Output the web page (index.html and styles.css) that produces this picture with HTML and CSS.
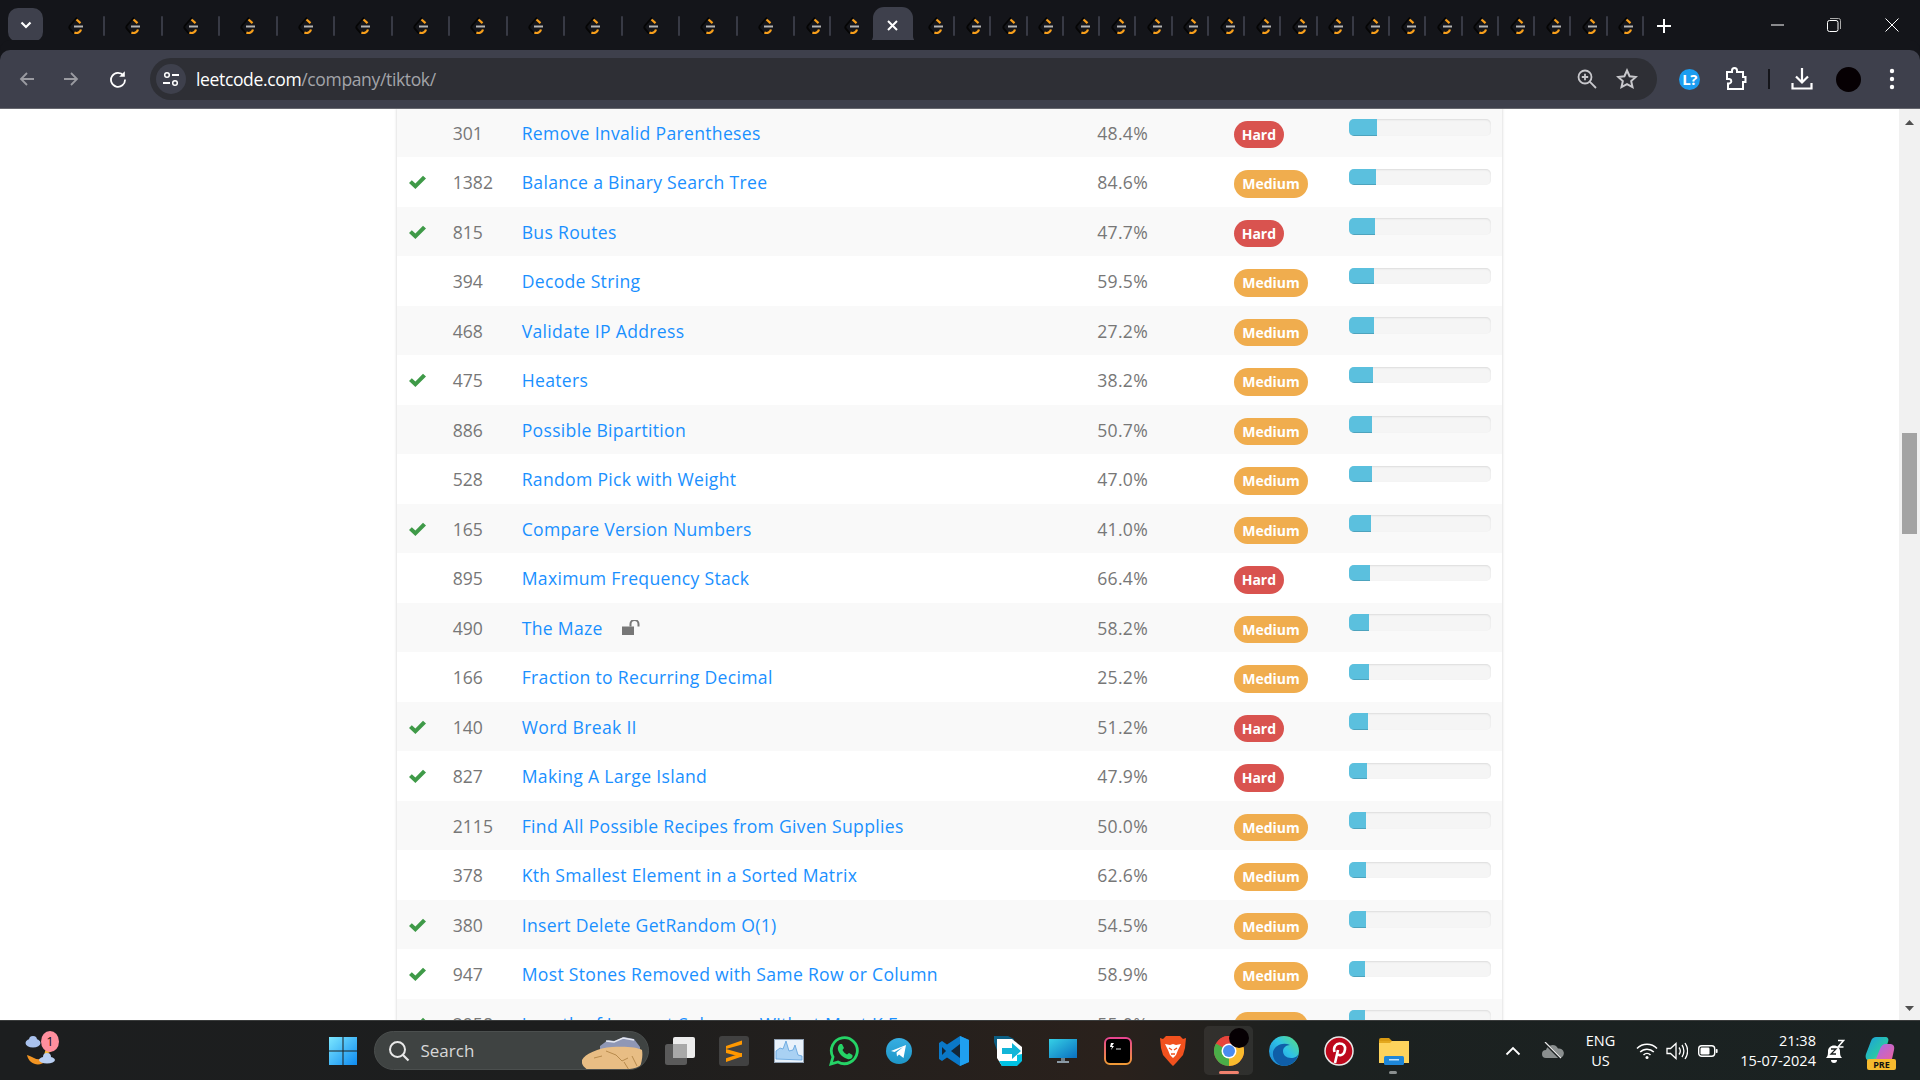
FILE: index.html
```html
<!DOCTYPE html>
<html lang="en">
<head>
<meta charset="utf-8">
<title>TikTok - LeetCode</title>
<link rel="stylesheet" href="styles.css">
</head>
<body>
<svg class="defs" width="0" height="0" aria-hidden="true">
  <symbol id="lc" viewBox="0 0 20 20">
    <path d="M11 1.500 4 9.500c-1 1.200-1 2.200 0 3.400l4 4.600" fill="none" stroke="#050505" stroke-width="1.800"/>
    <path d="M10.500 3.500l4 3.600" fill="none" stroke="#f89f1b" stroke-width="2.200"/>
    <path d="M15 13.500c-.6 2.600-3.600 4.400-6.600 3" fill="none" stroke="#f89f1b" stroke-width="2.200"/>
    <path d="M8 10.500h9" stroke="#b3b3b3" stroke-width="2"/>
  </symbol>
  <symbol id="ok" viewBox="0 0 17 14">
    <path d="M0 8 2.800 5.200 6.400 8.600 14 .8 17 3.600 6.400 14Z" fill="#3f9a48"/>
  </symbol>
</svg>

<header class="strip">
  <div class="tabsearch"><svg width="14" height="14" viewBox="0 0 14 14"><path d="M2.500 4.500 7 9l4.500-4.500" fill="none" stroke="#fff" stroke-width="2.200"/></svg></div>
  <div class="tabs">
    <div class="tab wide"><svg class="fav"><use href="#lc"/></svg></div>
    <div class="tab wide"><svg class="fav"><use href="#lc"/></svg></div>
    <div class="tab wide"><svg class="fav"><use href="#lc"/></svg></div>
    <div class="tab wide"><svg class="fav"><use href="#lc"/></svg></div>
    <div class="tab wide"><svg class="fav"><use href="#lc"/></svg></div>
    <div class="tab wide"><svg class="fav"><use href="#lc"/></svg></div>
    <div class="tab wide"><svg class="fav"><use href="#lc"/></svg></div>
    <div class="tab wide"><svg class="fav"><use href="#lc"/></svg></div>
    <div class="tab wide"><svg class="fav"><use href="#lc"/></svg></div>
    <div class="tab wide"><svg class="fav"><use href="#lc"/></svg></div>
    <div class="tab wide"><svg class="fav"><use href="#lc"/></svg></div>
    <div class="tab wide"><svg class="fav"><use href="#lc"/></svg></div>
    <div class="tab wide"><svg class="fav"><use href="#lc"/></svg></div>
    <div class="tab narrow"><svg class="fav"><use href="#lc"/></svg></div>
    <div class="tab before-active"><svg class="fav"><use href="#lc"/></svg></div>
    <div class="tab-active"><svg width="13" height="13" viewBox="0 0 13 13"><path d="M2 2l9 9M11 2l-9 9" stroke="#fff" stroke-width="2"/></svg></div>
    <div class="tab after-active"><svg class="fav"><use href="#lc"/></svg></div>
    <div class="tab narrow"><svg class="fav"><use href="#lc"/></svg></div>
    <div class="tab narrow"><svg class="fav"><use href="#lc"/></svg></div>
    <div class="tab narrow"><svg class="fav"><use href="#lc"/></svg></div>
    <div class="tab narrow"><svg class="fav"><use href="#lc"/></svg></div>
    <div class="tab narrow"><svg class="fav"><use href="#lc"/></svg></div>
    <div class="tab narrow"><svg class="fav"><use href="#lc"/></svg></div>
    <div class="tab narrow"><svg class="fav"><use href="#lc"/></svg></div>
    <div class="tab narrow"><svg class="fav"><use href="#lc"/></svg></div>
    <div class="tab narrow"><svg class="fav"><use href="#lc"/></svg></div>
    <div class="tab narrow"><svg class="fav"><use href="#lc"/></svg></div>
    <div class="tab narrow"><svg class="fav"><use href="#lc"/></svg></div>
    <div class="tab narrow"><svg class="fav"><use href="#lc"/></svg></div>
    <div class="tab narrow"><svg class="fav"><use href="#lc"/></svg></div>
    <div class="tab narrow"><svg class="fav"><use href="#lc"/></svg></div>
    <div class="tab narrow"><svg class="fav"><use href="#lc"/></svg></div>
    <div class="tab narrow"><svg class="fav"><use href="#lc"/></svg></div>
    <div class="tab narrow"><svg class="fav"><use href="#lc"/></svg></div>
    <div class="tab narrow"><svg class="fav"><use href="#lc"/></svg></div>
    <div class="tab narrow"><svg class="fav"><use href="#lc"/></svg></div>
  </div>
  <svg class="newtab" width="14" height="14" viewBox="0 0 14 14"><path d="M7 0v14M0 7h14" stroke="#fff" stroke-width="2"/></svg>
  <div class="winctl">
    <svg class="wc-min" width="14" height="14" viewBox="0 0 14 14"><path d="M0 7h13" stroke="#fff" stroke-width="1"/></svg>
    <svg class="wc-max" width="14" height="14" viewBox="0 0 14 14"><rect x=".5" y="2.500" width="10.500" height="11" rx="2" fill="none" stroke="#fff"/><path d="M3 .5h8.500q2 0 2 2V11" fill="none" stroke="#aaa"/></svg>
    <svg class="wc-close" width="14" height="14" viewBox="0 0 14 14"><path d="M.5.5l13 13M13.500.5l-13 13" stroke="#fff" stroke-width="1"/></svg>
  </div>
</header>

<nav class="toolbar">
  <div class="btn"><svg width="18" height="18" viewBox="0 0 18 18"><path d="M16 9H3M9 3 3 9l6 6" fill="none" stroke="#9a9ba1" stroke-width="1.800"/></svg></div>
  <div class="btn"><svg width="18" height="18" viewBox="0 0 18 18"><path d="M2 9h13M9 3l6 6-6 6" fill="none" stroke="#9a9ba1" stroke-width="1.800"/></svg></div>
  <div class="btn reload"><svg width="18" height="18" viewBox="0 0 18 18"><path d="M14.500 5.500A7 7 0 1 0 16 9.500" fill="none" stroke="#fff" stroke-width="1.800"/><path d="M15.800 1.200v5.600h-5.600z" fill="#fff"/></svg></div>
  <div class="omnibox">
    <div class="site"><svg width="18" height="18" viewBox="0 0 18 18"><circle cx="5" cy="5" r="2.300" fill="none" stroke="#fff" stroke-width="1.500"/><path d="M10 5h7M1 13h7" stroke="#fff" stroke-width="1.800"/><circle cx="13" cy="13" r="2.300" fill="none" stroke="#fff" stroke-width="1.500"/></svg></div>
    <div class="url">leetcode.com<span class="url-path">/company/tiktok/</span></div>
    <div class="omni-icons">
      <div class="omni-btn"><svg width="22" height="22" viewBox="0 0 22 22"><circle cx="9" cy="9" r="6.500" fill="none" stroke="#c8c8cc" stroke-width="1.800"/><path d="M13.700 13.700 20 20" stroke="#c8c8cc" stroke-width="1.800"/><path d="M9 5.800v6.400M5.800 9h6.400" stroke="#c8c8cc" stroke-width="1.800"/></svg></div>
      <div class="omni-btn"><svg width="22" height="22" viewBox="0 0 22 22"><path d="M11 2.500l2.600 5.700 6.200.7-4.600 4.200 1.300 6.100L11 16.200l-5.500 3 1.300-6.100-4.600-4.200 6.200-.7z" fill="none" stroke="#c8c8cc" stroke-width="2"/></svg></div>
    </div>
  </div>
  <div class="ext lc-ext"><span class="lc-badge">L?</span></div>
  <div class="ext puzzle"><svg width="22" height="24" viewBox="0 0 22 24"><path d="M2 5h5V3.500a2.500 2.500 0 0 1 5 0V5h6v5h2.500v5H18v7H3v-5.500h1.500a2.300 2.300 0 0 0 0-4.500H2z" fill="none" stroke="#fff" stroke-width="2"/></svg></div>
  <div class="tool-sep"></div>
  <div class="ext dl"><svg width="22" height="24" viewBox="0 0 22 24"><path d="M11 1v14M5 9.500l6 6 6-6" fill="none" stroke="#fff" stroke-width="2.200"/><path d="M1.500 16v5.500h19V16" fill="none" stroke="#fff" stroke-width="2.200"/></svg></div>
  <div class="ext avatar-wrap"><div class="avatar"></div></div>
  <div class="ext kebab"><svg width="6" height="22" viewBox="0 0 6 22"><circle cx="3" cy="3" r="2.200" fill="#fff"/><circle cx="3" cy="11" r="2.200" fill="#fff"/><circle cx="3" cy="19" r="2.200" fill="#fff"/></svg></div>
</nav>

<main class="viewport">
  <div class="page">
    <div class="table">
      <div class="row"><span class="c-check"></span><span class="c-num">301</span><span class="c-title"><a class="link">Remove Invalid Parentheses</a></span><span class="c-acc">48.4%</span><span class="c-diff"><span class="badge hard">Hard</span></span><span class="c-freq"><span class="bar"><span class="fill" style="width:28px"></span></span></span></div>
      <div class="row"><span class="c-check"><svg class="ok"><use href="#ok"/></svg></span><span class="c-num">1382</span><span class="c-title"><a class="link">Balance a Binary Search Tree</a></span><span class="c-acc">84.6%</span><span class="c-diff"><span class="badge medium">Medium</span></span><span class="c-freq"><span class="bar"><span class="fill" style="width:27px"></span></span></span></div>
      <div class="row"><span class="c-check"><svg class="ok"><use href="#ok"/></svg></span><span class="c-num">815</span><span class="c-title"><a class="link">Bus Routes</a></span><span class="c-acc">47.7%</span><span class="c-diff"><span class="badge hard">Hard</span></span><span class="c-freq"><span class="bar"><span class="fill" style="width:26px"></span></span></span></div>
      <div class="row"><span class="c-check"></span><span class="c-num">394</span><span class="c-title"><a class="link">Decode String</a></span><span class="c-acc">59.5%</span><span class="c-diff"><span class="badge medium">Medium</span></span><span class="c-freq"><span class="bar"><span class="fill" style="width:25px"></span></span></span></div>
      <div class="row"><span class="c-check"></span><span class="c-num">468</span><span class="c-title"><a class="link">Validate IP Address</a></span><span class="c-acc">27.2%</span><span class="c-diff"><span class="badge medium">Medium</span></span><span class="c-freq"><span class="bar"><span class="fill" style="width:25px"></span></span></span></div>
      <div class="row"><span class="c-check"><svg class="ok"><use href="#ok"/></svg></span><span class="c-num">475</span><span class="c-title"><a class="link">Heaters</a></span><span class="c-acc">38.2%</span><span class="c-diff"><span class="badge medium">Medium</span></span><span class="c-freq"><span class="bar"><span class="fill" style="width:24px"></span></span></span></div>
      <div class="row"><span class="c-check"></span><span class="c-num">886</span><span class="c-title"><a class="link">Possible Bipartition</a></span><span class="c-acc">50.7%</span><span class="c-diff"><span class="badge medium">Medium</span></span><span class="c-freq"><span class="bar"><span class="fill" style="width:23px"></span></span></span></div>
      <div class="row"><span class="c-check"></span><span class="c-num">528</span><span class="c-title"><a class="link">Random Pick with Weight</a></span><span class="c-acc">47.0%</span><span class="c-diff"><span class="badge medium">Medium</span></span><span class="c-freq"><span class="bar"><span class="fill" style="width:23px"></span></span></span></div>
      <div class="row"><span class="c-check"><svg class="ok"><use href="#ok"/></svg></span><span class="c-num">165</span><span class="c-title"><a class="link">Compare Version Numbers</a></span><span class="c-acc">41.0%</span><span class="c-diff"><span class="badge medium">Medium</span></span><span class="c-freq"><span class="bar"><span class="fill" style="width:22px"></span></span></span></div>
      <div class="row"><span class="c-check"></span><span class="c-num">895</span><span class="c-title"><a class="link">Maximum Frequency Stack</a></span><span class="c-acc">66.4%</span><span class="c-diff"><span class="badge hard">Hard</span></span><span class="c-freq"><span class="bar"><span class="fill" style="width:21px"></span></span></span></div>
      <div class="row"><span class="c-check"></span><span class="c-num">490</span><span class="c-title"><a class="link">The Maze</a><svg class="lock" width="19" height="15" viewBox="0 0 19 15"><path d="M0 6.500h12V15H0z" fill="#777"/><path d="M8.500 6.500V4a4 4 0 0 1 8 0v2.500" fill="none" stroke="#777" stroke-width="2"/></svg></span><span class="c-acc">58.2%</span><span class="c-diff"><span class="badge medium">Medium</span></span><span class="c-freq"><span class="bar"><span class="fill" style="width:20px"></span></span></span></div>
      <div class="row"><span class="c-check"></span><span class="c-num">166</span><span class="c-title"><a class="link">Fraction to Recurring Decimal</a></span><span class="c-acc">25.2%</span><span class="c-diff"><span class="badge medium">Medium</span></span><span class="c-freq"><span class="bar"><span class="fill" style="width:20px"></span></span></span></div>
      <div class="row"><span class="c-check"><svg class="ok"><use href="#ok"/></svg></span><span class="c-num">140</span><span class="c-title"><a class="link">Word Break II</a></span><span class="c-acc">51.2%</span><span class="c-diff"><span class="badge hard">Hard</span></span><span class="c-freq"><span class="bar"><span class="fill" style="width:19px"></span></span></span></div>
      <div class="row"><span class="c-check"><svg class="ok"><use href="#ok"/></svg></span><span class="c-num">827</span><span class="c-title"><a class="link">Making A Large Island</a></span><span class="c-acc">47.9%</span><span class="c-diff"><span class="badge hard">Hard</span></span><span class="c-freq"><span class="bar"><span class="fill" style="width:18px"></span></span></span></div>
      <div class="row"><span class="c-check"></span><span class="c-num">2115</span><span class="c-title"><a class="link">Find All Possible Recipes from Given Supplies</a></span><span class="c-acc">50.0%</span><span class="c-diff"><span class="badge medium">Medium</span></span><span class="c-freq"><span class="bar"><span class="fill" style="width:17px"></span></span></span></div>
      <div class="row"><span class="c-check"></span><span class="c-num">378</span><span class="c-title"><a class="link">Kth Smallest Element in a Sorted Matrix</a></span><span class="c-acc">62.6%</span><span class="c-diff"><span class="badge medium">Medium</span></span><span class="c-freq"><span class="bar"><span class="fill" style="width:17px"></span></span></span></div>
      <div class="row"><span class="c-check"><svg class="ok"><use href="#ok"/></svg></span><span class="c-num">380</span><span class="c-title"><a class="link">Insert Delete GetRandom O(1)</a></span><span class="c-acc">54.5%</span><span class="c-diff"><span class="badge medium">Medium</span></span><span class="c-freq"><span class="bar"><span class="fill" style="width:17px"></span></span></span></div>
      <div class="row"><span class="c-check"><svg class="ok"><use href="#ok"/></svg></span><span class="c-num">947</span><span class="c-title"><a class="link">Most Stones Removed with Same Row or Column</a></span><span class="c-acc">58.9%</span><span class="c-diff"><span class="badge medium">Medium</span></span><span class="c-freq"><span class="bar"><span class="fill" style="width:16px"></span></span></span></div>
      <div class="row"><span class="c-check"><svg class="ok"><use href="#ok"/></svg></span><span class="c-num">2958</span><span class="c-title"><a class="link">Length of Longest Subarray With at Most K Frequency</a></span><span class="c-acc">55.0%</span><span class="c-diff"><span class="badge medium">Medium</span></span><span class="c-freq"><span class="bar"><span class="fill" style="width:16px"></span></span></span></div>
    </div>
  </div>
  <div class="scrollbar">
    <svg class="sb-arrow" width="21" height="17" viewBox="0 0 21 17"><path d="M6 11l4.500-5 4.500 5z" fill="#505050"/></svg>
    <div class="sb-track"><div class="sb-thumb"></div></div>
    <svg class="sb-arrow" width="21" height="17" viewBox="0 0 21 17"><path d="M6 6l4.500 5L15 6z" fill="#505050"/></svg>
  </div>
</main>

<footer class="taskbar">
  <div class="weather">
    <svg width="36" height="40" viewBox="0 0 36 40"><ellipse cx="9" cy="12" rx="7.500" ry="4.500" fill="#a9c2ee"/><circle cx="9" cy="9" r="4" fill="#a9c2ee"/><path d="M3 24c2 10 13 12 19 6 2-2 4-5 3-9-2 6-10 9-15 6-2-1-4-2-7-3z" fill="#f29422"/><path d="M23 14l5 6-8 4z" fill="#f6b73c"/><ellipse cx="23" cy="29" rx="8" ry="3.500" fill="#b9cff2"/><circle cx="23" cy="26" r="4" fill="#b9cff2"/></svg>
    <span class="notif">1</span>
  </div>
  <div class="task win"><svg width="30" height="30" viewBox="0 0 30 30"><defs><linearGradient id="wg" x1="0" y1="0" x2="1" y2="1"><stop offset="0" stop-color="#7ce7ff"/><stop offset="1" stop-color="#0e8bf0"/></linearGradient></defs><path d="M1 1h13.500v13.500H1zM15.500 1H29v13.500H15.500zM1 15.500h13.500V29H1zM15.500 15.500H29V29H15.500z" fill="url(#wg)"/></svg></div>
  <div class="search">
    <svg width="24" height="24" viewBox="0 0 24 24"><circle cx="10.500" cy="10.500" r="7.500" fill="none" stroke="#e8e8e8" stroke-width="2"/><path d="M16 16l5.500 5.500" stroke="#e8e8e8" stroke-width="2.200"/></svg>
    <span class="search-label">Search</span>
    <svg class="search-art" width="62" height="38" viewBox="0 0 62 38"><path d="M18 14l8-6 7 1 9-4 10 2 6 8v10H18z" fill="#8f97b5"/><path d="M24 9l8 1 9-4 11 2" fill="none" stroke="#e4e7f0" stroke-width="1.500"/><path d="M0 28c3-6 16-12 30-13 12-1 26 0 30 3 1 6 0 12-3 20H6C1 35-1 31 0 28z" fill="#e8bd84"/><path d="M24 19l10 4 6 6 6-3M42 30l5 8M50 24l5 10M12 26l8-2" fill="none" stroke="#b78a4c" stroke-width="1"/></svg>
  </div>
  <div class="task first-app"><svg width="30" height="30" viewBox="0 0 30 30"><rect x="0" y="8" width="22" height="21" rx="2.500" fill="#5a5a5a"/><rect x="8" y="1" width="22" height="21" rx="2" fill="#ececec"/><rect x="8" y="8" width="14" height="14" fill="#a8a8a8"/></svg></div>
  <div class="task"><svg width="30" height="30" viewBox="0 0 30 30"><rect width="30" height="30" rx="3" fill="#414141"/><path d="M7 13v-3l16-5.500v4zM23 17v3.500L7 26v-3.800zM7 13l16 4.500v3.500L7 17z" fill="#ff9800"/></svg></div>
  <div class="task"><svg width="30" height="24" viewBox="0 0 30 24"><rect x=".5" y=".5" width="29" height="23" fill="#e9f2fb" stroke="#93a3b5"/><path d="M2 20V12l4-3 3 1 3-8 3 10 4-1 2-5 3 10 4 1v4z" fill="#a9d1f3" stroke="#5c9fdc" stroke-width=".8"/></svg></div>
  <div class="task"><svg width="30" height="30" viewBox="0 0 30 30"><path d="M2 28l2-7A13 13 0 1 1 9 26z" fill="none" stroke="#25d366" stroke-width="2.800"/><path d="M11 8l2 0 2 4-1.500 2c1 2 2 3 4.500 4.500l2-1.500 3.500 2v2c-1 2-3 2.500-5 2-5-1.500-8-5-9.500-9-.5-2.500 0-4.500 2-6z" fill="#25d366"/></svg></div>
  <div class="task"><svg width="26" height="26" viewBox="0 0 26 26"><defs><linearGradient id="tg" x1="0" y1="0" x2="0" y2="1"><stop offset="0" stop-color="#37aee2"/><stop offset="1" stop-color="#1e96c8"/></linearGradient></defs><circle cx="13" cy="13" r="13" fill="url(#tg)"/><path d="M5 13l15-6-2.500 13-4.500-3.500-2 2-.5-4 6.500-5.500-8.500 5z" fill="#fff"/></svg></div>
  <div class="task"><svg width="30" height="30" viewBox="0 0 30 30"><path d="M21 0 8 8.500 3 5 0 7v16l3 2 5-3.500L21 30l9-4V4z" fill="#0a78c8"/><path d="M21 0l9 4v22l-9 4z" fill="#1fa0f0"/><path d="M21 8v14l-9-7z" fill="#16181c" opacity=".85"/><path d="M3 11l4 4-4 4z" fill="#16181c" opacity=".85"/></svg></div>
  <div class="task"><svg width="28" height="30" viewBox="0 0 28 30"><path d="M0 0h14l6 3v12L5 20 0 6z" fill="#0c5f84"/><path d="M3 3h15l10 8v12l-7 7H8L3 22z" fill="#fff"/><path d="M8 30l-3-5h18v-6l5-1v7l-5 5z" fill="#00c2e4"/><path d="M8 12h10V7l9 8-9 8v-5H8z" fill="#12b5d8"/></svg></div>
  <div class="task"><svg width="28" height="24" viewBox="0 0 28 24"><defs><linearGradient id="mg" x1="0" y1="0" x2="1" y2="1"><stop offset="0" stop-color="#35d0e6"/><stop offset="1" stop-color="#0a6fc0"/></linearGradient></defs><rect x="0" y="0" width="28" height="19" fill="url(#mg)"/><rect x="12" y="19" width="4" height="3" fill="#6d7d88"/><rect x="8" y="22" width="12" height="2" fill="#8b9aa5"/></svg></div>
  <div class="task"><svg width="28" height="28" viewBox="0 0 28 28"><defs><linearGradient id="bg2" x1="0" y1="0" x2="0" y2="1"><stop offset="0" stop-color="#e6458f"/><stop offset="1" stop-color="#f09a36"/></linearGradient></defs><rect x="1" y="1" width="26" height="26" rx="5" fill="#000" stroke="url(#bg2)" stroke-width="2"/><path d="M7 6l3 0-2 3 2 0-3 4 1-3-2 0z" fill="#fff"/><path d="M12 12h5" stroke="#bbb" stroke-width="1.200"/></svg></div>
  <div class="task"><svg width="26" height="30" viewBox="0 0 26 30"><path d="M6 0h14l3 3 3-1-1 10-2 7-7 8-3 3-3-3-7-8-2-7L0 2l3 1z" fill="#f1511e"/><path d="M5 8l5 1 3-1 3 1 5-1-3 6-2 5-3 3-3-3-2-5z" fill="#fff"/><path d="M9 12l3 2M17 12l-3 2M11 18h4" stroke="#f1511e" stroke-width="1.300"/></svg></div>
  <div class="task active-app">
    <svg width="30" height="30" viewBox="0 0 30 30"><circle cx="15" cy="15" r="15" fill="#e8453c"/><path d="M15 15 28 7.500A15 15 0 0 1 15 30z" fill="#f9bb2d"/><path d="M15 15 15 30A15 15 0 0 1 2 7.500z" fill="#4aae48"/><path d="M2 7.500A15 15 0 0 1 28 7.500H15z" fill="#e8453c"/><circle cx="15" cy="15" r="7.500" fill="#fff"/><circle cx="15" cy="15" r="6" fill="#4a8cf0"/></svg>
    <span class="chrome-avatar"></span>
    <span class="run-active"></span>
  </div>
  <div class="task"><svg width="30" height="30" viewBox="0 0 30 30"><defs><linearGradient id="eg" x1="0" y1="1" x2="1" y2="0"><stop offset="0" stop-color="#1b7fd0"/><stop offset=".55" stop-color="#2ec2e8"/><stop offset="1" stop-color="#5de07a"/></linearGradient></defs><circle cx="15" cy="15" r="15" fill="url(#eg)"/><path d="M30 17c-1 3-4 5-8 5-5 0-8-3-8-7 0-3 3-6 7-6-7-3-15 0-17 7-1 7 4 13 11 14 7 0 13-5 15-13z" fill="#0f5ea8"/></svg></div>
  <div class="task"><svg width="30" height="30" viewBox="0 0 30 30"><circle cx="15" cy="15" r="14" fill="#bd081c" stroke="#e9e9e9" stroke-width="1.500"/><path d="M11 27l3-13M10.500 16C9 11 12 7.500 15.500 7.500c4 0 6 2.500 5.500 6-.5 4-3 6.500-6 5.500-1.500-.5-2-1.500-2-1.500" fill="none" stroke="#fff" stroke-width="2.600"/></svg></div>
  <div class="task folder-app">
    <svg width="30" height="28" viewBox="0 0 30 28"><path d="M0 3a2 2 0 0 1 2-2h8l3 3h-13z" fill="#d99a12"/><path d="M0 4h30v22H0z" fill="#fdd35c"/><path d="M0 4h13l-2 2H0z" fill="#e3a81e"/><rect x="5" y="19" width="20" height="9" rx="1.500" fill="#1e86d8"/><rect x="10" y="22" width="10" height="1.500" fill="#bfe1fb"/></svg>
    <span class="run-idle"></span>
  </div>
  <div class="tray-chevron"><svg width="16" height="10" viewBox="0 0 16 10"><path d="M1.500 8.500 8 2l6.500 6.500" fill="none" stroke="#fff" stroke-width="1.800"/></svg></div>
  <div class="tray-cloud"><svg width="22" height="18" viewBox="0 0 22 18"><path d="M4 16a4 4 0 0 1 0-8 6.500 6.500 0 0 1 12-1.500 4.800 4.800 0 0 1 2 9.500z" fill="#8a8f8f"/><path d="M3 1l16 16" stroke="#1b2121" stroke-width="2.500"/><path d="M3 0l16 16" stroke="#e8e8e8" stroke-width="1.200"/></svg></div>
  <div class="lang"><span>ENG</span><span>US</span></div>
  <div class="tray-icon"><svg width="22" height="16" viewBox="0 0 22 16"><path d="M1 5.500a14 14 0 0 1 20 0M4.200 9a9.500 9.500 0 0 1 13.600 0M7.500 12a5 5 0 0 1 7 0" fill="none" stroke="#fff" stroke-width="1.500"/><circle cx="11" cy="14.500" r="1.500" fill="#fff"/></svg></div>
  <div class="tray-icon vol"><svg width="22" height="18" viewBox="0 0 22 18"><path d="M1 6.500h3.500L10 1.500v15l-5.500-5H1z" fill="none" stroke="#fff" stroke-width="1.300"/><path d="M13 5.500c1.500 2 1.500 5 0 7M16 3c2.500 3.500 2.500 8.500 0 12M19 1c3.300 5 3.300 11 0 16" fill="none" stroke="#fff" stroke-width="1.300"/></svg></div>
  <div class="tray-icon batt"><svg width="20" height="14" viewBox="0 0 20 14"><rect x=".7" y="1.700" width="16" height="10.600" rx="3" fill="none" stroke="#fff" stroke-width="1.400"/><rect x="2.500" y="3.500" width="9" height="7" rx="1.200" fill="#fff"/><rect x="17.800" y="5" width="1.800" height="4" rx=".8" fill="#fff"/></svg></div>
  <div class="clock"><span>21:38</span><span>15-07-2024</span></div>
  <div class="bell"><svg width="20" height="24" viewBox="0 0 20 24"><path d="M1 19c2-2 2-4 2-7 0-3 2.500-5.500 6-5.500s6 2.500 6 5.500c0 3 0 5 2 7z" fill="#fff"/><path d="M6 21a3 3 0 0 0 6 0z" fill="#fff"/><path d="M6 10h5l-5 5h5" fill="none" stroke="#1b2121" stroke-width="1.300"/><path d="M13 1.500h5.500L13 8h5.500" fill="none" stroke="#fff" stroke-width="1.500"/></svg></div>
  <div class="copilot">
    <svg width="30" height="30" viewBox="0 0 30 30"><defs><linearGradient id="c1" x1="0" y1="0" x2="1" y2="1"><stop offset="0" stop-color="#1a9fe0"/><stop offset=".6" stop-color="#2ac6a8"/><stop offset="1" stop-color="#e8d84a"/></linearGradient><linearGradient id="c2" x1="0" y1="0" x2="1" y2="1"><stop offset="0" stop-color="#a56ae8"/><stop offset="1" stop-color="#f0609a"/></linearGradient></defs><path d="M11 1h9c3 0 4 2 3 5l-5 15c-1 3-3 4-6 4H5C1 25 0 21 1 18L6 5c1-3 3-4 5-4z" fill="url(#c1)"/><path d="M21 8h4c3 0 5 2 4 6l-2 9c-1 2-2 3-5 3h-8c-2 0-3-1-3-3l4-10c1-3 3-5 6-5z" fill="url(#c2)"/></svg>
    <span class="pre">PRE</span>
  </div>
</footer>
</body>
</html>
```
FILE: styles.css
```css
* { box-sizing: border-box; }
html, body { margin: 0; padding: 0; height: 100%; }
body {
  width: 1920px;
  height: 1080px;
  overflow: hidden;
  display: flex;
  flex-direction: column;
  font-family: "Open Sans", "Noto Sans", sans-serif;
  background: #fff;
}
.defs { position: absolute; }
svg { display: block; flex: none; }

/* tab strip */
.strip {
  height: 50px;
  flex: none;
  display: flex;
  background: #14151a;
  padding-left: 8px;
}
.tabsearch {
  width: 35px;
  height: 34px;
  margin-top: 8px;
  border-radius: 10px;
  background: #3e404c;
  display: flex;
  align-items: center;
  justify-content: center;
}
.tabs { display: flex; margin-left: 3.5px; }
.tab {
  display: flex;
  align-items: center;
  justify-content: space-between;
  padding-top: 2px;
}
.tab::after {
  content: "";
  width: 2px;
  height: 20px;
  margin-right: -1px;
  background: #383a45;
  border-radius: 1px;
}
.fav { width: 20px; height: 20px; }
.wide { width: 57.5px; padding-left: 19px; }
.narrow { width: 36.25px; padding-left: 9.8px; }
.before-active { width: 42.75px; padding-left: 11.8px; }
.before-active::after { display: none; }
.after-active { width: 41.5px; padding-left: 13.5px; }
.tab-active {
  position: relative;
  width: 39.5px;
  margin-top: 7px;
  background: #3e404c;
  border-radius: 11px 11px 0 0;
  display: flex;
  align-items: center;
  justify-content: center;
  padding-bottom: 6px;
}
.tab-active::before, .tab-active::after {
  content: "";
  position: absolute;
  bottom: 0;
  width: 14px;
  height: 14px;
}
.tab-active::before { left: -14px; background: radial-gradient(circle at 0 0, transparent 13.500px, #3e404c 14px); }
.tab-active::after { right: -14px; background: radial-gradient(circle at 100% 0, transparent 13.500px, #3e404c 14px); }
.newtab { margin: 19px 0 0 14px; }
.winctl { display: flex; margin-left: 100px; padding-top: 18px; }
.wc-min { margin-right: 42px; }
.wc-max { margin-right: 44px; }

/* toolbar */
.toolbar {
  height: 59px;
  flex: none;
  background: #3e404c;
  border-bottom: 1px solid #66676e;
  border-radius: 10px 10px 0 0;
  display: flex;
  padding: 8px 0 0 5px;
  position: relative;
  box-shadow: 0 -10px 0 #14151a;
}
.btn { width: 44px; height: 42px; display: flex; align-items: center; justify-content: center; }
.reload { margin-left: 2.500px; }
.omnibox {
  width: 1506.500px;
  height: 42px;
  margin-left: 10.500px;
  background: #2e2f35;
  border-radius: 21px;
  display: flex;
  align-items: center;
  padding: 0 9.500px 0 6px;
}
.site {
  width: 30px;
  height: 30px;
  border-radius: 50%;
  background: #3e404c;
  display: flex;
  align-items: center;
  justify-content: center;
}
.url { margin-left: 10px; font-size: 17.500px; color: #fff; letter-spacing: -.35px; }
.url-path { color: #a3a4a9; }
.omni-icons { margin-left: auto; display: flex; }
.omni-btn { width: 40px; display: flex; justify-content: center; }
.ext { width: 36px; height: 42px; display: flex; align-items: center; justify-content: center; }
.lc-ext { margin-left: 15px; }
.lc-badge {
  width: 21px;
  height: 21px;
  border-radius: 50%;
  background: #1c9df0;
  color: #fff;
  font-size: 15px;
  font-weight: 700;
  line-height: 21px;
  text-align: center;
  letter-spacing: -.5px;
}
.puzzle { margin-left: 10.500px; }
.tool-sep { width: 2px; height: 20px; margin: 11px 0 0 14px; background: #14151a; }
.dl { margin-left: 14px; }
.avatar-wrap { margin-left: 10px; }
.avatar { width: 25px; height: 25px; border-radius: 50%; background: #060003; }
.kebab { margin-left: 8px; }

/* page */
.viewport {
  flex: 1;
  min-height: 0;
  display: flex;
  overflow: hidden;
  background: #fff;
}
.page { flex: 1; min-width: 0; }
.table {
  width: 1105.600px;
  margin: -1.500px auto 0;
  box-shadow: 0 0 3px rgba(0, 0, 0, .2);
}
.row {
  height: 49.500px;
  display: grid;
  grid-template-columns: 56px 69px 575.500px 136.500px 115px 142px 1fr;
  align-items: center;
  color: #777;
  font-size: 17.600px;
}
.row:nth-child(odd) { background: #f9f9f9; }
.row > span { display: flex; align-items: center; padding-top: 1px; }
.c-check { padding-left: 12px; }
.ok { width: 17px; height: 14px; }
.link { color: #1a90ff; letter-spacing: .3px; }
.c-acc { letter-spacing: .3px; }
.lock { margin-left: 19.500px; margin-top: -1px; }
.c-diff { padding-top: 4px !important; }
.badge {
  height: 27.500px;
  padding: 0 8.500px;
  border-radius: 14px;
  color: #fff;
  font-size: 14px;
  font-weight: 700;
  line-height: 27px;
}
.hard { background: #d9534f; padding: 0 8px; }
.medium { background: #f0ad4e; }
.c-freq { align-self: start; padding-top: 11.500px !important; }
.bar {
  width: 142px;
  height: 16.500px;
  display: block;
  background: #f5f5f5;
  border-radius: 5px;
  box-shadow: inset 0 1px 2px rgba(0, 0, 0, .1);
  overflow: hidden;
}
.fill {
  display: block;
  height: 100%;
  background: #5bc0de;
  box-shadow: inset 0 -1px 0 rgba(0, 0, 0, .15);
}

/* scrollbar */
.scrollbar { width: 21px; flex: none; background: #f1f1f1; display: flex; flex-direction: column; }
.sb-track { flex: 1; padding: 302px 3px 0; }
.sb-thumb { height: 101px; background: #a3a3a3; }
.sb-arrow { margin-top: 5px; }
.sb-track + .sb-arrow { margin: 0 0 3px; }

/* taskbar */
.taskbar {
  height: 60px;
  flex: none;
  display: flex;
  align-items: center;
  border-top: 1px solid #3a3c3c;
  background: linear-gradient(90deg, #1c1e1f 0, #1d1e1e 30%, #2a211c 58%, #1c2120 68%, #1a2222 100%);
  position: relative;
  color: #fff;
}
.weather { width: 36px; margin-left: 24px; position: relative; }
.notif {
  position: absolute;
  left: 17px;
  top: 0;
  width: 18px;
  height: 21px;
  border-radius: 50%;
  background: #ff8f9e;
  color: #111;
  font-size: 13px;
  line-height: 21px;
  text-align: center;
}
.task { width: 54.900px; height: 49px; display: flex; align-items: center; justify-content: center; position: relative; flex: none; }
.win { margin-left: 255.500px; width: 55px; }
.search {
  width: 275.500px;
  height: 39px;
  margin-left: 3px;
  border-radius: 20px;
  background: #3f4342;
  border: 1px solid #4b4f4e;
  display: flex;
  align-items: center;
  padding-left: 12px;
  position: relative;
  overflow: hidden;
  flex: none;
}
.search-label { margin-left: 10px; font-size: 17px; color: #d8d8d8; }
.search-art { margin-left: auto; margin-right: 4px; }
.first-app { margin-left: 3.500px; width: 54px; }
.active-app { margin-left: .9px; }
.active-app::before {
  content: "";
  position: absolute;
  left: 3px;
  top: 0;
  width: 49px;
  height: 49px;
  border-radius: 5px;
  background: rgba(255, 255, 255, .07);
}
.active-app svg { position: relative; }
.chrome-avatar {
  position: absolute;
  left: 28px;
  top: 2px;
  width: 20px;
  height: 20px;
  border-radius: 50%;
  background: #060003;
}
.run-active { position: absolute; left: 18px; bottom: 1px; width: 20px; height: 3.500px; border-radius: 2px; background: #f0826e; }
.run-idle { position: absolute; left: 23px; bottom: 1px; width: 8px; height: 3.500px; border-radius: 2px; background: #8a8f8f; }
.tray-chevron { width: 30px; margin-left: 77px; display: flex; justify-content: center; }
.tray-cloud { width: 36px; margin-left: 6.700px; display: flex; justify-content: center; }
.lang {
  width: 40px;
  margin-left: 9.800px;
  display: flex;
  flex-direction: column;
  align-items: center;
  font-size: 14.500px;
  line-height: 20px;
}
.tray-icon { width: 30px; display: flex; justify-content: center; }
.lang + .tray-icon { margin-left: 11.500px; }
.vol, .batt { margin-left: .5px; }
.clock {
  width: 93px;
  display: flex;
  flex-direction: column;
  align-items: flex-end;
  font-size: 14.500px;
  line-height: 20px;
}
.bell { width: 28px; margin-left: 5.500px; display: flex; justify-content: center; }
.copilot { width: 40px; margin-left: 10.500px; position: relative; display: flex; justify-content: center; }
.pre {
  position: absolute;
  left: 7px;
  bottom: -4px;
  width: 29px;
  height: 11px;
  border-radius: 2px;
  background: #f6b92e;
  color: #111;
  font-size: 9px;
  font-weight: 700;
  line-height: 11px;
  text-align: center;
}
```
